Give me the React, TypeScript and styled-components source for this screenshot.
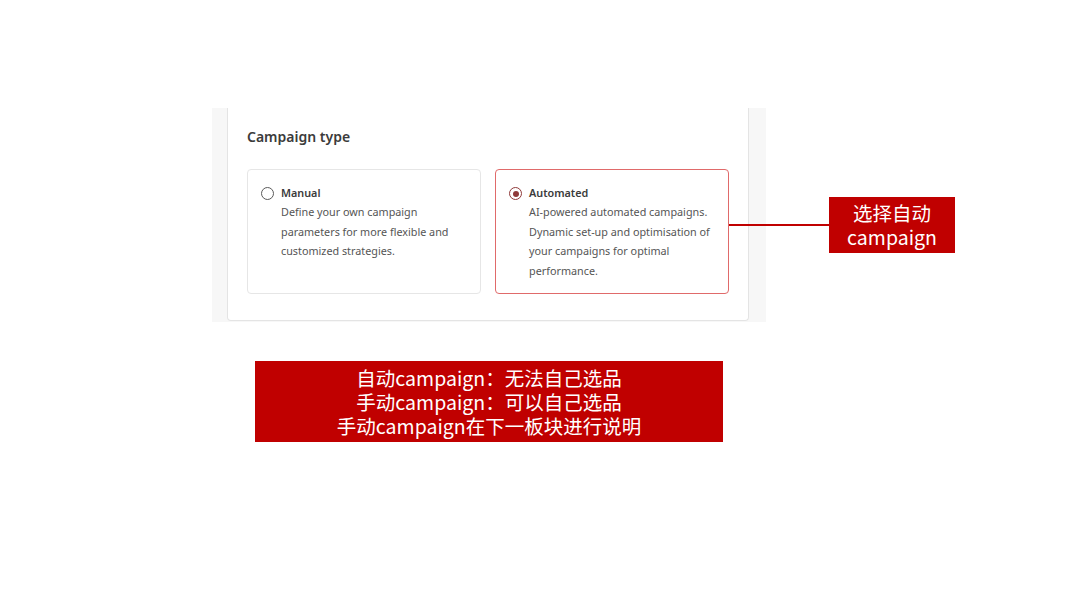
import React from "react";
import styled, { createGlobalStyle } from "styled-components";

const GlobalStyle = createGlobalStyle`
  html, body {
    margin: 0;
    padding: 0;
    background: #ffffff;
  }
  * {
    box-sizing: border-box;
  }
`;

const Slide = styled.div`
  position: relative;
  width: 1080px;
  height: 608px;
  padding-top: 108px;
  background: #ffffff;
  overflow: hidden;
`;

const Shot = styled.div`
  position: relative;
  width: 554px;
  height: 214px;
  margin-left: 212px;
  padding: 0 17px 1px 15px;
  background: #f7f7f7;
`;

const Card = styled.div`
  height: 100%;
  padding: 19px 20px 0 19px;
  background: #ffffff;
  border: 1px solid #e4e4e4;
  border-top: none;
  border-radius: 0 0 4px 4px;
  font-family: "Noto Sans", "Open Sans", sans-serif;
`;

const Title = styled.div`
  font-size: 14px;
  line-height: 20px;
  font-weight: 600;
  color: #3b3b3b;
`;

const Options = styled.div`
  display: grid;
  grid-template-columns: 234px 234px;
  gap: 14px;
  margin-top: 22px;
`;

const Option = styled.div<{ $selected?: boolean }>`
  display: flex;
  gap: 7px;
  height: 125px;
  padding: 14px 12px 0 13px;
  border: ${({ $selected }) => ($selected ? "1.5px solid #e06a6a" : "1px solid #e6e6e6")};
  border-radius: 4px;
`;

const Radio = styled.span<{ $checked?: boolean }>`
  flex: none;
  width: 13px;
  height: 13px;
  margin-top: 3px;
  border-radius: 50%;
  border: 1.6px solid ${({ $checked }) => ($checked ? "#8f3a3a" : "#5a5a5a")};
  display: flex;
  align-items: center;
  justify-content: center;
  &::after {
    content: "";
    display: ${({ $checked }) => ($checked ? "block" : "none")};
    width: 6px;
    height: 6px;
    border-radius: 50%;
    background: #8f3a3a;
  }
`;

const OptionBody = styled.div`
  display: flex;
  flex-direction: column;
`;

const Label = styled.div`
  font-size: 10.8px;
  line-height: 18px;
  font-weight: 600;
  color: #3b3b3b;
`;

const Desc = styled.div`
  font-size: 10.8px;
  line-height: 19.6px;
  color: #555555;
`;

const Callout = styled.div`
  position: absolute;
  left: 729px;
  top: 197px;
  display: flex;
  align-items: center;
`;

const Connector = styled.div`
  width: 100px;
  height: 1.5px;
  background: #c00000;
`;

const Tag = styled.div`
  width: 126px;
  height: 56px;
  padding-top: 4px;
  background: #c00000;
  color: #ffffff;
  font-family: "Noto Sans CJK SC", "Noto Sans", sans-serif;
  font-size: 19.5px;
  line-height: 24px;
  text-align: center;
`;

const Note = styled.div`
  width: 468px;
  height: 81px;
  margin: 39px 0 0 255px;
  padding-top: 5px;
  background: #c00000;
  color: #ffffff;
  font-family: "Noto Sans CJK SC", "Noto Sans", sans-serif;
  font-size: 19.5px;
  line-height: 24px;
  text-align: center;
`;

const options = [
  {
    label: "Manual",
    lines: ["Define your own campaign", "parameters for more flexible and", "customized strategies."],
    selected: false,
  },
  {
    label: "Automated",
    lines: [
      "AI-powered automated campaigns.",
      "Dynamic set-up and optimisation of",
      "your campaigns for optimal",
      "performance.",
    ],
    selected: true,
  },
];

export default function App() {
  return (
    <Slide>
      <GlobalStyle />
      <Shot>
        <Card>
          <Title>Campaign type</Title>
          <Options>
            {options.map((o) => (
              <Option key={o.label} $selected={o.selected}>
                <Radio $checked={o.selected} />
                <OptionBody>
                  <Label>{o.label}</Label>
                  {o.lines.map((l) => (
                    <Desc key={l}>{l}</Desc>
                  ))}
                </OptionBody>
              </Option>
            ))}
          </Options>
        </Card>
      </Shot>
      <Callout>
        <Connector />
        <Tag>
          选择自动
          <br />
          campaign
        </Tag>
      </Callout>
      <Note>
        自动campaign：无法自己选品
        <br />
        手动campaign：可以自己选品
        <br />
        手动campaign在下一板块进行说明
      </Note>
    </Slide>
  );
}
